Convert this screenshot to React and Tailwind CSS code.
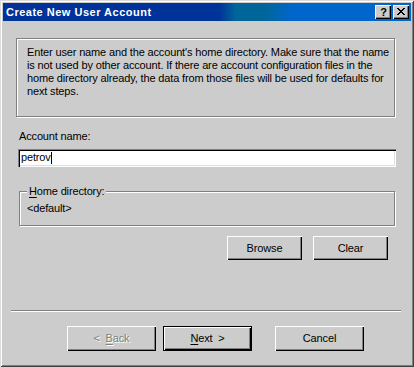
const raised = "shadow-[inset_1px_1px_0_#fff,inset_-1px_-1px_0_#000,inset_-2px_-2px_0_#808080]";
const etched = "border border-[#808080] shadow-[inset_1px_1px_0_#fff,1px_1px_0_#fff]";

function CloseGlyph() {
  const px = [
    [0, 0], [1, 0], [6, 0], [7, 0],
    [1, 1], [2, 1], [5, 1], [6, 1],
    [2, 2], [3, 2], [4, 2], [5, 2],
    [3, 3], [4, 3],
    [2, 4], [3, 4], [4, 4], [5, 4],
    [1, 5], [2, 5], [5, 5], [6, 5],
    [0, 6], [1, 6], [6, 6], [7, 6],
  ];
  return (
    <svg width="8" height="7" viewBox="0 0 8 7" shapeRendering="crispEdges">
      {px.map(([x, y], i) => (
        <rect key={i} x={x} y={y} width="1" height="1" fill="#000" />
      ))}
    </svg>
  );
}

export default function App() {
  return (
    <div className="w-[414px] h-[367px] bg-[#cccccc] p-[3px] shadow-[inset_1px_1px_0_#dcdcdc,inset_-1px_-1px_0_#404040,inset_2px_2px_0_#fff,inset_-2px_-2px_0_#808080] font-['Liberation_Sans',Arial,sans-serif] text-[11px] leading-[13px] tracking-[-0.15px] text-black overflow-hidden">
      {/* Title bar */}
      <div className="h-[18px] flex items-center pl-[3px] pr-[2px] bg-[linear-gradient(to_right,#00339a_0%,#003399_53%,#006699_57%,#006699_64%,#0066cc_71%,#0066cc_100%)]">
        <span className="text-white font-bold text-[11px] tracking-[0.5px] whitespace-nowrap">Create New User Account</span>
        <div className="ml-auto flex gap-[2px]">
          <div className={`w-[16px] h-[14px] bg-[#cccccc] flex items-center justify-center ${raised}`}>
            <span className="font-bold text-[11px] leading-[11px] text-black pl-[1px]">?</span>
          </div>
          <div className={`w-[16px] h-[14px] bg-[#cccccc] flex items-center justify-center pb-[1px] ${raised}`}>
            <CloseGlyph />
          </div>
        </div>
      </div>

      {/* Description */}
      <div className={`ml-[13px] mt-[17px] w-[379px] h-[79px] pt-[7px] pl-[10px] ${etched}`}>
        <div className="whitespace-nowrap">Enter user name and the account's home directory. Make sure that the name</div>
        <div className="whitespace-nowrap">is not used by other account. If there are account configuration files in the</div>
        <div className="whitespace-nowrap">home directory already, the data from those files will be used for defaults for</div>
        <div className="whitespace-nowrap">next steps.</div>
      </div>

      {/* Account name */}
      <div className="ml-[16px] mt-[13px]">Account name:</div>
      <div className="ml-[15px] mt-[6px] w-[378px] h-[18px] bg-white p-[2px] pl-[3px] flex items-start leading-[11px] shadow-[inset_1px_1px_0_#808080,inset_2px_2px_0_#000,inset_-1px_-1px_0_#fff,inset_-2px_-2px_0_#dfdfdf]">
        <span className="pt-[1px]">petrov</span>
        <span className="w-px h-[12px] bg-black mt-[1px]"></span>
      </div>

      {/* Home directory group */}
      <div className={`relative ml-[16px] mt-[24px] w-[376px] h-[35px] pt-[10px] pl-[7px] ${etched}`}>
        <span className="absolute left-[7px] top-[-7px] bg-[#cccccc] px-[2px]">
          <span className="underline underline-offset-[2px]">H</span>ome directory:
        </span>
        <div>&lt;default&gt;</div>
      </div>

      {/* Browse / Clear */}
      <div className="ml-[224px] mt-[10px] flex gap-[11px]">
        <div className={`w-[75px] h-[24px] flex items-center justify-center ${raised}`}>Browse</div>
        <div className={`w-[75px] h-[24px] flex items-center justify-center ${raised}`}>Clear</div>
      </div>

      {/* Separator */}
      <div className="ml-[8px] mt-[50px] w-[390px] h-[2px] border-t border-t-[#808080] border-b border-b-white"></div>

      {/* Bottom buttons */}
      <div className="ml-[64px] mt-[14px] flex">
        <div className={`w-[89px] h-[25px] flex items-center justify-center whitespace-pre text-[#808080] [text-shadow:1px_1px_0_#fff] ${raised}`}>
          {"<  "}<span className="underline underline-offset-[2px]">B</span>ack
        </div>
        <div className={`ml-[7px] w-[89px] h-[25px] flex items-center justify-center whitespace-pre border border-black ${raised}`}>
          <span className="underline underline-offset-[2px]">N</span>{"ext  >"}
        </div>
        <div className={`ml-[23px] w-[89px] h-[25px] flex items-center justify-center ${raised}`}>Cancel</div>
      </div>
    </div>
  );
}
